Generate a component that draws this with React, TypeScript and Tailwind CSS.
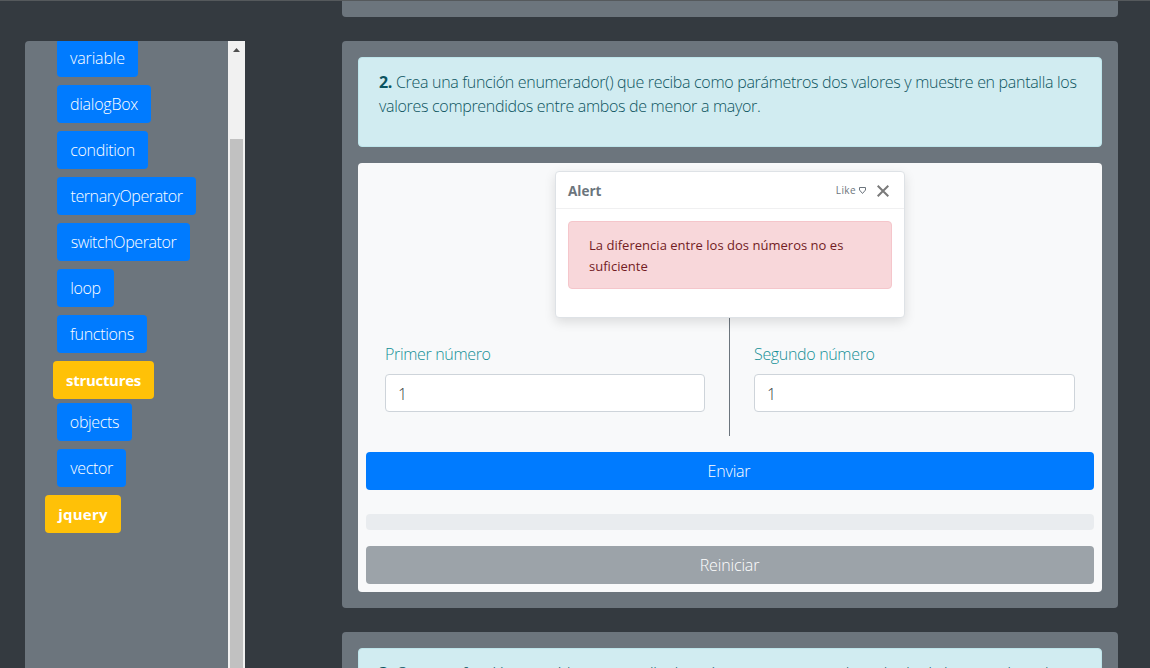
import React from "react";

const items: { label: string; kind: "link" | "sub" | "root"; w: string; ls: string }[] = [
  { label: "variable", kind: "link", w: "w-[81px]", ls: "tracking-[-0.15px]" },
  { label: "dialogBox", kind: "link", w: "w-[94px]", ls: "tracking-[-0.25px]" },
  { label: "condition", kind: "link", w: "w-[91px]", ls: "tracking-[-0.3px]" },
  { label: "ternaryOperator", kind: "link", w: "w-[139px]", ls: "tracking-[-0.4px]" },
  { label: "switchOperator", kind: "link", w: "w-[133px]", ls: "tracking-[-0.4px]" },
  { label: "loop", kind: "link", w: "w-[57px]", ls: "tracking-[-0.3px]" },
  { label: "functions", kind: "link", w: "w-[90px]", ls: "tracking-[-0.3px]" },
  { label: "structures", kind: "sub", w: "w-[101px]", ls: "text-[15px] tracking-[-0.3px]" },
  { label: "objects", kind: "link", w: "w-[75px]", ls: "tracking-[-0.35px]" },
  { label: "vector", kind: "link", w: "w-[69px]", ls: "tracking-[-0.35px]" },
  { label: "jquery", kind: "root", w: "w-[76px]", ls: "text-[15px] tracking-[0.25px]" },
];

const kinds = {
  link: "ml-8 mb-2 bg-[#007bff] font-light",
  sub: "ml-7 mb-1 bg-[#ffc107] font-bold",
  root: "ml-5 bg-[#ffc107] font-bold",
};

function Sidebar() {
  return (
    <aside className="mt-[41px] ml-[25px] flex h-[627px] w-[220px] shrink-0 overflow-hidden rounded-tl bg-[#6c757d]">
      <nav className="-mt-0.5 flex flex-1 flex-col items-start">
        {items.map((i) => (
          <a
            key={i.label}
            className={`flex h-[38px] shrink-0 items-center justify-center whitespace-nowrap rounded text-white ${kinds[i.kind]} ${i.w} ${i.ls}`}
          >
            {i.label}
          </a>
        ))}
      </nav>
      <div className="flex w-[17px] flex-col items-center bg-[#f1f1f1]">
        <svg className="mt-[6px] h-[5px] w-[7px] shrink-0" viewBox="0 0 7 5">
          <path d="M0 5L3.5 1L7 5Z" fill="#505050" />
        </svg>
        <div className="mt-[87px] mr-px w-[13px] flex-1 bg-[#c1c1c1]" />
      </div>
    </aside>
  );
}

function Field({ label, width }: { label: string; width: string }) {
  return (
    <div className={`shrink-0 ${width}`}>
      <div className="h-6 leading-6 tracking-[-0.33px] text-[#138f96]">{label}</div>
      <div className="mt-2 flex h-[38px] items-center rounded border border-[#ced4da] bg-white px-3 text-[#343a40]">
        <span className="pt-0.5">1</span>
      </div>
    </div>
  );
}

function Toast() {
  return (
    <div className="absolute top-2 left-[197px] h-[147px] w-[350px] rounded border border-[#dee2e6] bg-white text-sm shadow-[0_4px_12px_rgba(0,0,0,0.12)]">
      <div className="flex h-[37px] items-center border-b border-[#f0f0f1] px-3 pt-0.5 text-[#6c757d]">
        <strong className="flex-1 pt-px text-[13.5px] font-bold">Alert</strong>
        <small className="flex items-center pb-0.5 text-[10px] font-normal tracking-[0.4px]">
          Like
          <svg className="ml-[3px] h-[7px] w-[7px]" viewBox="0 0 7 7" fill="none" stroke="#6c757d">
            <path d="M.5 .5H6.5V3L3.5 6.5L.5 3Z" />
          </svg>
        </small>
        <svg className="mr-[3px] ml-[11px] h-3 w-3" viewBox="0 0 12 12" stroke="#7a7a7a" strokeWidth="2">
          <path d="M.7 .7L11.3 11.3M11.3 .7L.7 11.3" />
        </svg>
      </div>
      <div className="mx-3 mt-3 h-[68px] rounded border border-[#f5c6cb] bg-[#f8d7da] px-5 pt-[13px] text-[13px] leading-[21px] font-normal tracking-[0.02px] whitespace-nowrap text-[#721c24]">
        La diferencia entre los dos números no es
        <br />
        suficiente
      </div>
    </div>
  );
}

export default function App() {
  return (
    <div className="flex h-[668px] w-[1150px] overflow-hidden bg-[#343a40] font-['Open_Sans','Noto_Sans',sans-serif] text-base font-light shadow-[inset_0_1px_0_#55595c]">
      <Sidebar />
      <main className="ml-[97px] flex w-[776px] flex-col gap-6">
        <div className="mt-px h-4 shrink-0 rounded-b bg-[#6c757d]" />
        <section className="h-[567px] shrink-0 rounded bg-[#6c757d] p-4">
          <div className="h-[90px] rounded border border-[#bee5eb] bg-[#d1ecf1] px-5 pt-3 leading-6 tracking-[-0.305px] whitespace-nowrap text-[#0c5460]">
            <strong className="font-bold">2.</strong> Crea una función enumerador() que reciba como parámetros dos valores y muestre en pantalla los
            <br />
            valores comprendidos entre ambos de menor a mayor.
          </div>
          <div className="relative mt-4 flex h-[429px] flex-col rounded bg-[#f8f9fa] px-2 pt-[155px]">
            <div className="flex h-[118px] pt-6 pl-[19px]">
              <Field label="Primer número" width="w-[320px]" />
              <div className="-mt-6 mr-6 ml-6 h-[118px] w-px shrink-0 bg-[#6c757d]" />
              <Field label="Segundo número" width="w-[321px]" />
            </div>
            <div className="mt-4 flex h-[38px] items-center justify-center rounded bg-[#007bff] pr-0.5 tracking-[-0.2px] text-white">Enviar</div>
            <div className="mt-6 h-4 rounded bg-[#e9ecef]" />
            <div className="mt-4 flex h-[38px] items-center justify-center rounded bg-[#9ca3a9] pr-px tracking-[-0.15px] text-white">Reiniciar</div>
            <Toast />
          </div>
        </section>
        <section className="h-[123px] shrink-0 rounded bg-[#6c757d] p-4">
          <div className="h-[90px] rounded border border-[#bee5eb] bg-[#d1ecf1] px-5 pt-3 leading-6 tracking-[-0.305px] whitespace-nowrap text-[#0c5460]">
            <strong className="font-bold">3.</strong> Crea una función que pida por pantalla dos números y muestre el resultado de la suma de ambos
          </div>
        </section>
      </main>
    </div>
  );
}
